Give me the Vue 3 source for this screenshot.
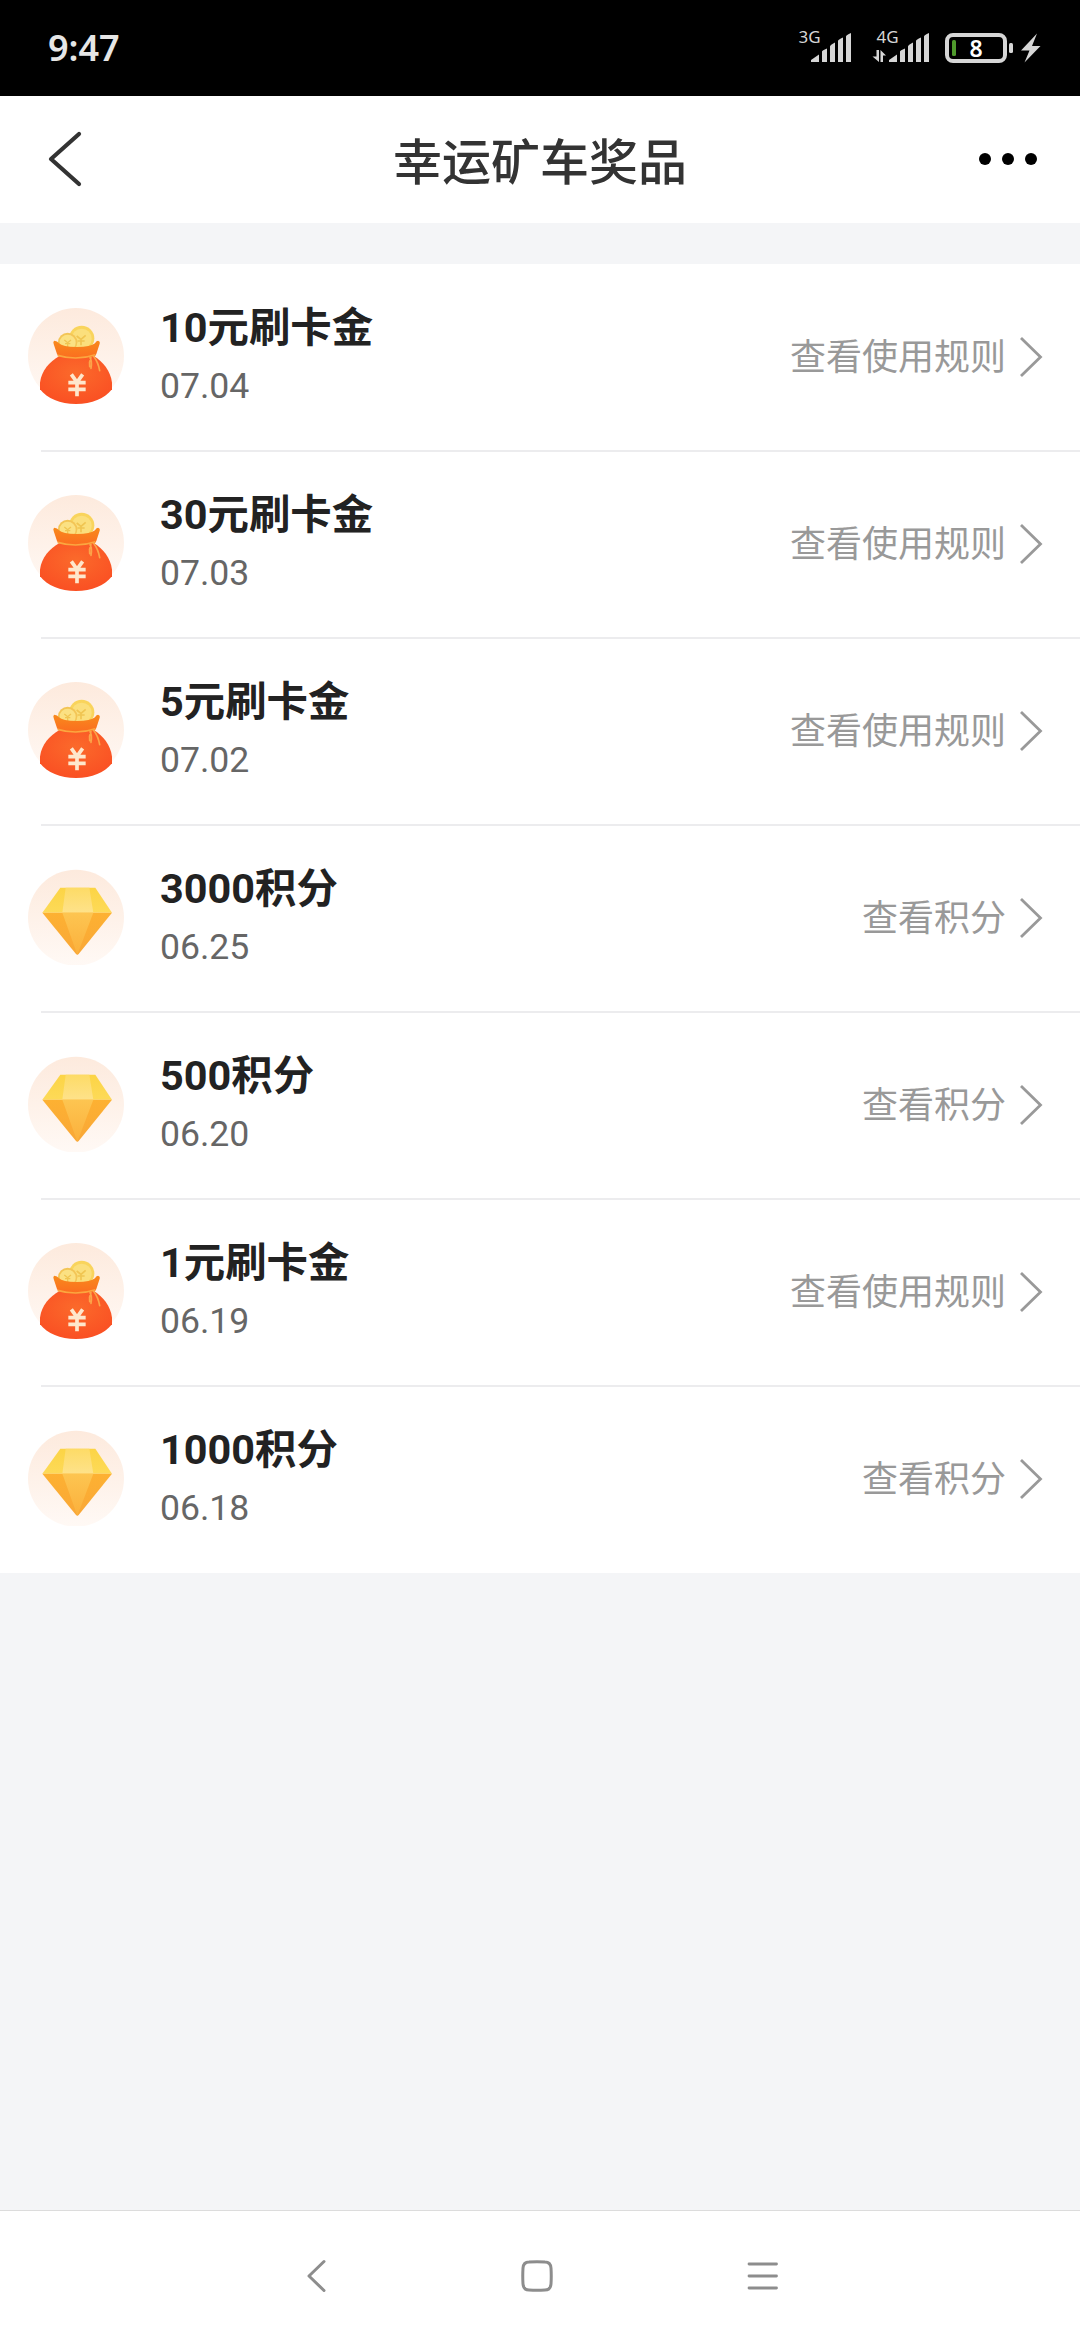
<script setup>
const prizes = [
  { kind: 'cash', title: '10元刷卡金', date: '07.04' },
  { kind: 'cash', title: '30元刷卡金', date: '07.03' },
  { kind: 'cash', title: '5元刷卡金', date: '07.02' },
  { kind: 'points', title: '3000积分', date: '06.25' },
  { kind: 'points', title: '500积分', date: '06.20' },
  { kind: 'cash', title: '1元刷卡金', date: '06.19' },
  { kind: 'points', title: '1000积分', date: '06.18' },
]
const actions = { cash: '查看使用规则', points: '查看积分' }
</script>

<template>
  <div class="screen">
    <svg class="defs" width="0" height="0" aria-hidden="true">
      <defs>
        <linearGradient id="halo" x1="0" y1="0" x2="0" y2="1">
          <stop offset="0" stop-color="#fdeadd" />
          <stop offset="1" stop-color="#fff9f5" />
        </linearGradient>
        <radialGradient id="bag" cx="0.5" cy="0.35" r="0.65">
          <stop offset="0" stop-color="#fb6a2b" />
          <stop offset="1" stop-color="#fa5023" />
        </radialGradient>
        <linearGradient id="rim" x1="0" y1="0" x2="0" y2="1">
          <stop offset="0" stop-color="#f88a1c" />
          <stop offset="1" stop-color="#fb6d20" />
        </linearGradient>
        <linearGradient id="crownSide" x1="0" y1="0" x2="0" y2="1">
          <stop offset="0" stop-color="#fcd445" />
          <stop offset="1" stop-color="#fdda58" />
        </linearGradient>
        <linearGradient id="crownMid" x1="0" y1="0" x2="0" y2="1">
          <stop offset="0" stop-color="#fddb66" />
          <stop offset="1" stop-color="#fee28a" />
        </linearGradient>
        <linearGradient id="baseSide" x1="0" y1="0" x2="0" y2="1">
          <stop offset="0" stop-color="#fdb132" />
          <stop offset="1" stop-color="#f9a737" />
        </linearGradient>
        <linearGradient id="baseMid" x1="0" y1="0" x2="0" y2="1">
          <stop offset="0" stop-color="#fdc551" />
          <stop offset="1" stop-color="#fbb03c" />
        </linearGradient>
      </defs>
    </svg>

    <header class="status">
      <span class="time">9:47</span>
      <svg width="260" height="96" viewBox="790 0 260 96">
        <g fill="#d6d6d6">
          <text class="net" x="798.500" y="43">3G</text>
          <path d="M811 62v-2l8-5.500v7.500zM822 62V51.500q0-1 5-3V62zM830 62V46.500q0-1.500 5-4V62zM838 62V41q0-1.500 5-3.500V62zM846 62V36.500q0-1.500 5-3.500V62z" />
          <text class="net" x="876.500" y="43">4G</text>
          <path d="M889 62v-2l8-5.500v7.500zM900 62V51.500q0-1 5-3V62zM908 62V46.500q0-1.500 5-4V62zM916 62V41q0-1.500 5-3.500V62zM924 62V36.500q0-1.500 5-3.500V62z" />
          <path d="M876.500 50h2.500v12l-6.500-5.500h4zM880.500 62h2.500V55.500h3L880.500 50z" />
          <rect x="1009" y="43" width="4" height="10" rx="1.500" />
          <path d="M1037 33.500L1021 50.500h8.500L1024.500 62.500L1040.500 46h-8.500z" />
        </g>
        <rect x="947" y="35" width="58" height="26" rx="6" fill="none" stroke="#d6d6d6" stroke-width="4" />
        <rect x="952" y="40" width="4" height="16" rx="1.500" fill="#4f9a2c" />
        <text class="level" x="976" y="57">8</text>
      </svg>
    </header>

    <nav class="titlebar">
      <svg width="40" height="60" viewBox="0 0 40 60">
        <path d="M34 6L6 31L34 56" fill="none" stroke="#333" stroke-width="4.200" stroke-linecap="round" stroke-linejoin="round" />
      </svg>
      <h1>幸运矿车奖品</h1>
      <div class="more"><i></i><i></i><i></i></div>
    </nav>

    <ul class="list">
      <li v-for="p in prizes" :key="p.date" class="row">
        <svg v-if="p.kind === 'cash'" class="icon" viewBox="54 54 288 288">
          <circle cx="198" cy="198" r="144" fill="url(#halo)" />
          <circle cx="215" cy="145" r="38" fill="#f9d45c" />
          <circle cx="215" cy="146" r="30" fill="#fbdf7c" />
          <path d="M200 138l13 10 14-12M213 148v18M202 153h22" fill="none" stroke="#f0c552" stroke-width="5" />
          <circle cx="173" cy="157" r="29" fill="#f3c556" />
          <circle cx="173" cy="158" r="24" fill="#fbe183" />
          <path d="M163 150l10 8 10-8M173 158v14M165 161h16" fill="none" stroke="#f0c552" stroke-width="4" />
          <path d="M147 199C119 216 95 240 90 278V298C112 326 150 342 198 342S284 326 306 298V278C301 240 278 216 253 199Z" fill="url(#bag)" />
          <path d="M133 152Q128 155 131 162L141 192Q143 198 150 200Q200 210 250 200Q257 198 259 192L269 161Q271 154 264 152Q258 153 255 160Q243 171 200 171Q157 171 147 160Q142 152 133 152Z" fill="url(#rim)" />
          <path d="M143 196Q200 213 256 194" fill="none" stroke="#fba63f" stroke-width="5" />
          <path d="M240 203Q247 216 243 235M251 199Q265 218 269 242M243 203Q236 217 239 230" fill="none" stroke="#fba449" stroke-width="5" stroke-linecap="round" />
          <path d="M184 253L201 277L218 253M175 278H227M175 298H227M201 275V319" fill="none" stroke="#fee7cc" stroke-width="11" />
        </svg>
        <svg v-else class="icon" viewBox="54 54 288 288">
          <circle cx="198" cy="200" r="144" fill="url(#halo)" />
          <path d="M151 110H256L306 185H97Z" fill="url(#crownSide)" />
          <path d="M167 110H238L250 185H157Z" fill="url(#crownMid)" />
          <path d="M97 185H306L206 309Q202 313 198 309Z" fill="url(#baseSide)" />
          <path d="M157 185H250L202 311Z" fill="url(#baseMid)" />
        </svg>
        <div class="body">
          <div class="info">
            <strong>{{ p.title }}</strong>
            <time>{{ p.date }}</time>
          </div>
          <a class="action">
            <span>{{ actions[p.kind] }}</span>
            <svg width="24" height="42" viewBox="0 0 24 42">
              <path d="M2 2L21.500 21L2 40" fill="none" stroke="#999" stroke-width="2.800" />
            </svg>
          </a>
        </div>
      </li>
    </ul>

    <footer class="sysnav">
      <svg width="20" height="34" viewBox="0 0 20 34">
        <path d="M17 2.500L2 17L17 31.500" fill="none" stroke="#8d8d8d" stroke-width="3" stroke-linecap="round" stroke-linejoin="round" />
      </svg>
      <svg width="32" height="32" viewBox="0 0 32 32">
        <path d="M8 2Q16 1.300 24 2Q29.500 2 30 8Q30.500 16 30 24Q29.500 30 24 30Q16 30.700 8 30Q2.500 30 2 24Q1.500 16 2 8Q2.500 2 8 2Z" fill="none" stroke="#8d8d8d" stroke-width="3" />
      </svg>
      <svg width="32" height="32" viewBox="0 0 32 32">
        <path d="M2 4H29.500M2 16H29.500M2 28H29.500" stroke="#8d8d8d" stroke-width="2.800" stroke-linecap="round" />
      </svg>
    </footer>
  </div>
</template>

<style>
body {
  margin: 0;
  background: #f4f5f7;
}
</style>

<style scoped>
.screen {
  display: flex;
  flex-direction: column;
  width: 1080px;
  height: 2340px;
  overflow: hidden;
  background: #f4f5f7;
  font-family: Roboto, "Noto Sans CJK SC", sans-serif;
}
.defs {
  position: absolute;
}
svg {
  display: block;
  flex: none;
}
.status {
  display: flex;
  align-items: center;
  justify-content: space-between;
  box-sizing: border-box;
  flex: none;
  height: 96px;
  padding: 0 30px 0 48px;
  background: #000;
}
.time {
  color: #e6e6e6;
  font: 600 36px/50px "Noto Sans", sans-serif;
}
.net {
  font: 400 17px "Noto Sans", sans-serif;
}
.level {
  fill: #fff;
  font: 600 23px "Noto Sans", sans-serif;
  text-anchor: middle;
}
.titlebar {
  display: grid;
  grid-template-columns: 1fr auto 1fr;
  align-items: center;
  box-sizing: border-box;
  flex: none;
  height: 127px;
  padding: 0 43px 3px 45px;
  background: #fff;
}
.titlebar h1 {
  margin: 0 0 0 -2px;
  padding-top: 11px;
  color: #333;
  font-size: 49px;
  font-weight: 500;
  line-height: 70px;
}
.more {
  display: flex;
  justify-content: flex-end;
  gap: 11px;
  padding-top: 2px;
}
.more i {
  width: 12px;
  height: 12px;
  border-radius: 50%;
  background: #000;
}
.list {
  flex: none;
  margin: 41px 0 0;
  padding: 1px 0 0;
  list-style: none;
  background: #fff;
}
.row {
  display: flex;
  box-sizing: border-box;
  height: 187px;
  padding-left: 28px;
  background: linear-gradient(#ececee, #ececee) 41px 100% / 1039px 2px no-repeat;
}
.row:last-child {
  height: 186px;
  background: none;
}
.icon {
  width: 96px;
  height: 96px;
  margin-top: 43px;
}
.body {
  display: flex;
  flex: 1;
  justify-content: space-between;
  padding: 0 37px 0 36px;
}
.info {
  display: flex;
  flex-direction: column;
  padding-top: 33px;
}
.info strong {
  color: #222;
  font-size: 41.4px;
  font-weight: 700;
  line-height: 60px;
}
.info time {
  color: #666;
  font-size: 35.6px;
  line-height: 56px;
}
.action {
  display: flex;
  align-items: center;
  gap: 13px;
  height: 56px;
  margin-top: 64px;
  color: #999;
  font-size: 36px;
  font-weight: 400;
  line-height: 56px;
}
.action span {
  padding-top: 2px;
}
.sysnav {
  display: flex;
  align-items: center;
  gap: 194px;
  box-sizing: border-box;
  flex: none;
  height: 130px;
  margin-top: auto;
  padding-left: 307px;
  border-top: 1px solid #dcdcdc;
  background: #fff;
}
</style>
